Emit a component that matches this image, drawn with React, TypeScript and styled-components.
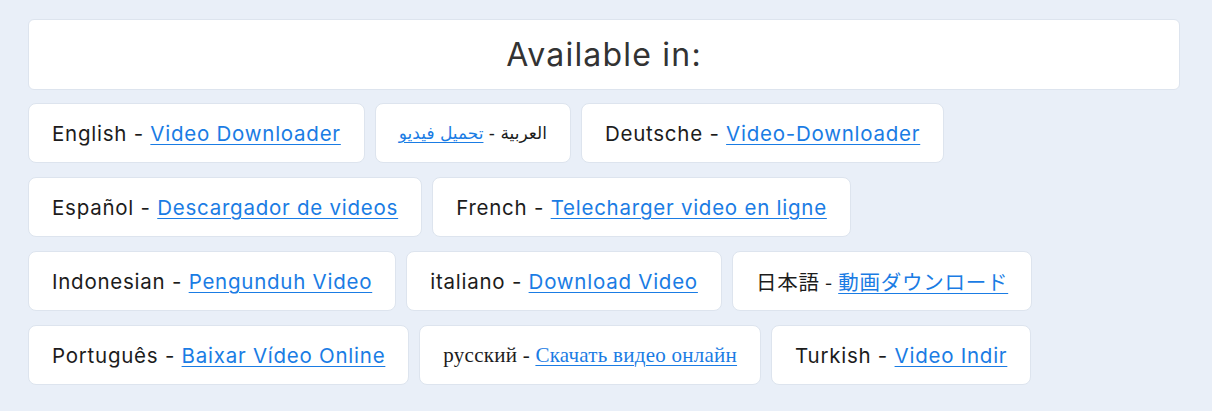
import styled, { createGlobalStyle } from "styled-components";

const GlobalStyle = createGlobalStyle`
    html, body {
        margin: 0;
        padding: 0;
        background: #e9eff8;
    }
    body {
        font-family: "Inter", "Noto Sans", sans-serif;
        color: #1c1c1c;
    }
`;

const Page = styled.div`
    padding: 19px 32px 24px 28px;
    display: flex;
    flex-direction: column;
    gap: 13px;
`;

const Header = styled.div`
    height: 71px;
    box-sizing: border-box;
    background: #fff;
    border: 1px solid #dde4ee;
    border-radius: 6px;
    display: flex;
    align-items: center;
    justify-content: center;
`;

const Title = styled.h2`
    margin: 0;
    font-size: 32px;
    font-weight: 400;
    color: #333;
    letter-spacing: 1.2px;
`;

const List = styled.div`
    display: flex;
    flex-wrap: wrap;
    column-gap: 10px;
    row-gap: 14px;
`;

const Card = styled.div<{ $font?: string; $size?: number; $spacing?: number }>`
    height: 60px;
    box-sizing: border-box;
    padding: 0 23px;
    background: #fff;
    border: 1px solid #dde4ee;
    border-radius: 8px;
    display: flex;
    align-items: center;
    font-size: ${(p) => p.$size ?? 20.5}px;
    letter-spacing: ${(p) => p.$spacing ?? 0.75}px;
    font-family: ${(p) => p.$font ?? `"Inter", "Noto Sans", sans-serif`};
    white-space: nowrap;
`;

const Text = styled.span`
    color: #1c1c1c;
`;

const Link = styled.a`
    color: #1a7ce4;
    text-decoration: underline;
    text-underline-offset: 3px;
    text-decoration-thickness: 1px;
`;

type Lang = {
    name: string;
    link: string;
    font?: string;
    size?: number;
    spacing?: number;
    rtl?: boolean;
};

const langs: Lang[] = [
    { name: "English", link: "Video Downloader" },
    { name: "العربية", link: "تحميل فيديو", font: `"DejaVu Sans", "Liberation Serif", serif`, size: 17, spacing: 0, rtl: true },
    { name: "Deutsche", link: "Video-Downloader" },
    { name: "Español", link: "Descargador de videos" },
    { name: "French", link: "Telecharger video en ligne" },
    { name: "Indonesian", link: "Pengunduh Video" },
    { name: "italiano", link: "Download Video" },
    { name: "日本語", link: "動画ダウンロード", font: `"Noto Sans CJK JP", sans-serif`, size: 20.5, spacing: 0.75 },
    { name: "Português", link: "Baixar Vídeo Online" },
    { name: "русский", link: "Скачать видео онлайн", font: `"Liberation Serif", serif`, size: 21, spacing: 0.25 },
    { name: "Turkish", link: "Video Indir" },
];

export default function App() {
    return (
        <>
            <GlobalStyle />
            <Page>
                <Header>
                    <Title>Available in:</Title>
                </Header>
                <List>
                    {langs.map((l) => (
                        <Card
                            key={l.name}
                            $font={l.font}
                            $size={l.size}
                            $spacing={l.spacing}
                            dir={l.rtl ? "rtl" : undefined}
                        >
                            <Text>
                                {l.name} - <Link href="#">{l.link}</Link>
                            </Text>
                        </Card>
                    ))}
                </List>
            </Page>
        </>
    );
}
